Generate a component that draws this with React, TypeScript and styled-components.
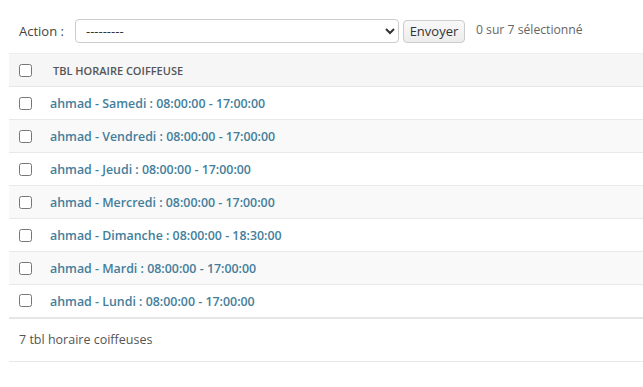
import styled, { createGlobalStyle } from "styled-components";

const Global = createGlobalStyle`
    body {
        margin: 0;
        background: #fff;
        font-family: "Open Sans", "Noto Sans", sans-serif;
        font-size: 13px;
        color: #333;
    }
`

const Page = styled.div`
    padding: 19px 0 0 9px;
`

const Actions = styled.div`
    display: flex;
    align-items: center;
    height: 24px;
    padding-left: 10px;
    margin-bottom: 10px;
`

const Label = styled.label`
    font-size: 13px;
    color: #444;
    margin-right: 11px;
`

const Select = styled.select`
    width: 324px;
    height: 24px;
    border: 1px solid #ccc;
    border-radius: 4px;
    background: #fff;
    font-family: inherit;
    font-size: 13px;
    color: #333;
    padding: 0 6px;
    margin: 0;
`

const Button = styled.button`
    height: 23px;
    width: 62px;
    margin-left: 4px;
    border: 1px solid #ccc;
    border-radius: 4px;
    background: linear-gradient(#f9f9f9, #ececec);
    font-family: inherit;
    font-size: 13px;
    color: #333;
    padding: 0;
`

const Counter = styled.span`
    margin-left: 11px;
    font-size: 12.2px;
    color: #666;
    position: relative;
    top: -2px;
`

const Table = styled.table`
    width: 100%;
    border-collapse: collapse;
`

const HeadRow = styled.tr`
    height: 33px;
    background: #f6f6f6;
    border-top: 1px solid #eee;
    border-bottom: 1px solid #e6e6e6;
`

const Row = styled.tr<{ $alt: boolean }>`
    height: 33px;
    background: ${p => (p.$alt ? "#f9f9f9" : "#fff")};
    border-bottom: 1px solid #e8e8e8;
    &:last-child {
        border-bottom: 2px solid #e6e6e6;
    }
`

const CheckCell = styled.td`
    width: 24px;
    padding: 0 0 0 10px;
    vertical-align: middle;
    line-height: 0;
`

const Box = styled.input`
    width: 13px;
    height: 13px;
    margin: 0;
`

const HeadCell = styled.th`
    text-align: left;
    padding: 0 0 0 10px;
    font-size: 11px;
    font-weight: 600;
    color: #555;
    text-transform: uppercase;
    letter-spacing: 0;
`

const NameCell = styled.th`
    text-align: left;
    padding: 0 0 0 7px;
    font-weight: 600;
`

const Link = styled.a`
    color: #447e9b;
    font-size: 12.4px;
    text-decoration: none;
`

const Footer = styled.p`
    margin: 0;
    height: 42px;
    display: flex;
    align-items: center;
    padding-left: 10px;
    font-size: 12.5px;
    color: #555;
    border-bottom: 1px solid #e8e8e8;
`

const rows = [
    "ahmad - Samedi : 08:00:00 - 17:00:00",
    "ahmad - Vendredi : 08:00:00 - 17:00:00",
    "ahmad - Jeudi : 08:00:00 - 17:00:00",
    "ahmad - Mercredi : 08:00:00 - 17:00:00",
    "ahmad - Dimanche : 08:00:00 - 18:30:00",
    "ahmad - Mardi : 08:00:00 - 17:00:00",
    "ahmad - Lundi : 08:00:00 - 17:00:00",
]

export default function App() {
    return (
        <>
            <Global />
            <Page>
                <Actions>
                    <Label>Action :</Label>
                    <Select defaultValue="">
                        <option value="">---------</option>
                    </Select>
                    <Button>Envoyer</Button>
                    <Counter>0 sur 7 sélectionné</Counter>
                </Actions>
                <Table>
                    <thead>
                        <HeadRow>
                            <CheckCell><Box type="checkbox" /></CheckCell>
                            <HeadCell>TBL horaire coiffeuse</HeadCell>
                        </HeadRow>
                    </thead>
                    <tbody>
                        {rows.map((r, i) => (
                            <Row key={r} $alt={i % 2 === 1}>
                                <CheckCell><Box type="checkbox" /></CheckCell>
                                <NameCell><Link href="#">{r}</Link></NameCell>
                            </Row>
                        ))}
                    </tbody>
                </Table>
                <Footer>7 tbl horaire coiffeuses</Footer>
            </Page>
        </>
    )
}
